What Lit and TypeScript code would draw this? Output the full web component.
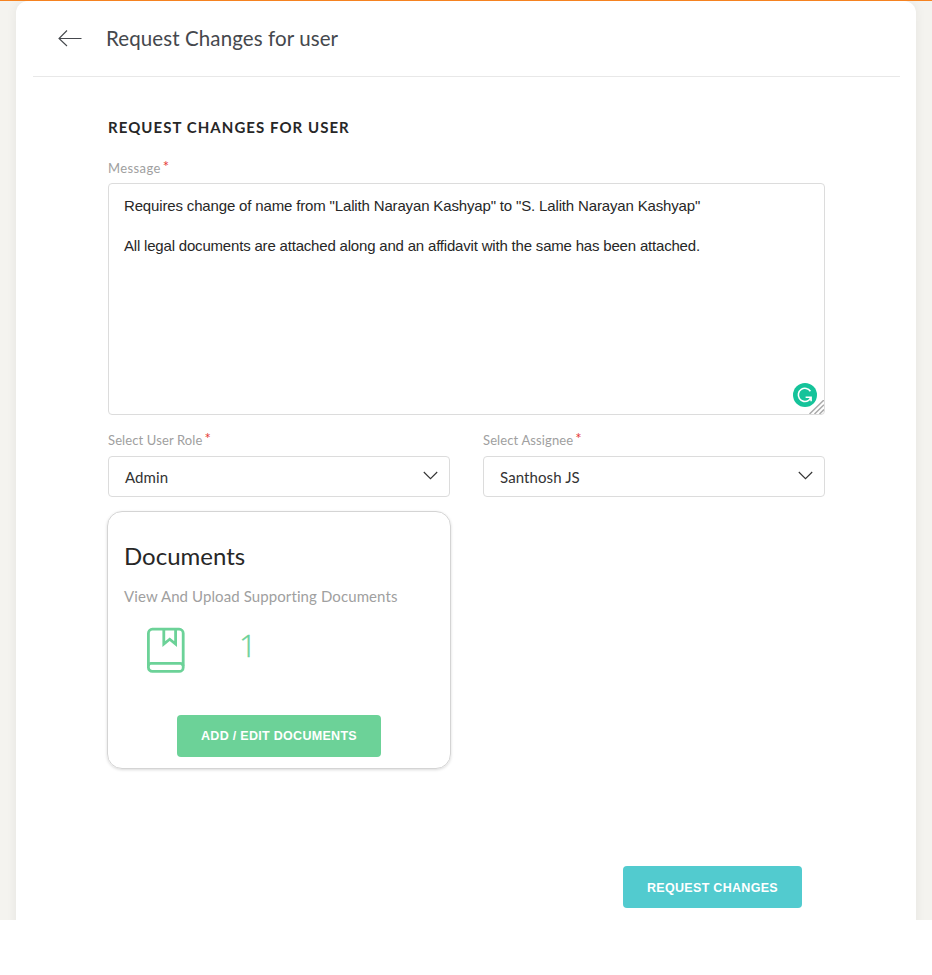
import { LitElement, html, css } from "lit";
import { customElement, property } from "lit/decorators.js";

@customElement("select-field")
class SelectField extends LitElement {
  @property() label = "";
  @property() value = "";

  static styles = css`
    :host { display: block; width: 342px; }
    .label { height: 23px; font-size: 13px; line-height: 18px; letter-spacing: 0.12px; color: #a0a0a0; display: flex; }
    .star { color: #e53935; font-size: 15px; line-height: 14px; margin-left: 2px; letter-spacing: 0; }
    .box { box-sizing: border-box; height: 41px; margin-top: 2px; border: 1px solid #dcdcdc; border-radius: 4px; display: flex; align-items: center; justify-content: space-between; padding: 0 11px 0 16px; font-size: 15px; color: #333; }
    .value { letter-spacing: 0.1px; }
    svg { display: block; margin-top: -2px; }
  `;

  render() {
    return html`
      <div class="label"><span>${this.label}</span><span class="star">*</span></div>
      <div class="box">
        <span class="value">${this.value}</span>
        <svg width="15" height="9" viewBox="0 0 15 9" fill="none" stroke="#333" stroke-width="1.1"><path d="M.8 1 7.5 7.7 14.2 1" /></svg>
      </div>
    `;
  }
}

@customElement("app-root")
class AppRoot extends LitElement {
  static styles = css`
    :host { display: block; height: 975px; overflow: hidden; background: #fff; font-family: Lato, "Liberation Sans", sans-serif; color: #272727; }
    .page { box-sizing: border-box; height: 920px; border-top: 1px solid #f58220; background: #f4f3ef; padding: 0 16px; overflow: hidden; }
    .sheet { box-sizing: border-box; height: 940px; background: #fff; border-radius: 12px; box-shadow: 0 0 12px rgba(0, 0, 0, 0.06); padding: 0 17px; }
    .head { box-sizing: border-box; height: 76px; width: 867px; border-bottom: 1px solid #e8e8e8; display: flex; align-items: center; padding: 0 0 1px 25px; }
    .back { display: block; margin-top: -1px; }
    .title { margin: 0 0 0 24px; font-size: 20.5px; line-height: 28px; font-weight: 400; letter-spacing: 0.1px; color: #45484d; }
    .body { padding: 0 0 0 75px; width: 717px; }
    .section { margin: 0; padding-top: 40px; height: 20px; font-size: 15px; line-height: 20px; font-weight: 700; letter-spacing: 1.05px; }
    .label { height: 24px; margin-top: 22px; font-size: 13px; line-height: 18px; letter-spacing: 0.4px; color: #a0a0a0; display: flex; }
    .star { color: #e53935; font-size: 15px; line-height: 14px; margin-left: 2px; letter-spacing: 0; }
    .message { position: relative; box-sizing: border-box; height: 232px; border: 1px solid #dcdcdc; border-radius: 4px; padding: 12px 15px; font: 15px/20px "Liberation Sans", Arial, sans-serif; }
    .message p { margin: 0 0 20px; white-space: nowrap; letter-spacing: -0.155px; }
    .message p + p { letter-spacing: -0.19px; }
    .grammar { position: absolute; right: 7px; bottom: 7px; }
    .grip { position: absolute; right: 0; bottom: 0; }
    .fields { display: flex; justify-content: space-between; margin-top: 16px; }
    .card { box-sizing: border-box; width: 344px; height: 258px; margin: 14px 0 0 -1px; border: 1px solid #d4d4d4; border-radius: 15px; box-shadow: 0 1px 3px rgba(0, 0, 0, 0.15); padding: 27px 16px 0; }
    .name { margin: 0; font-size: 24px; line-height: 34px; font-weight: 400; }
    .hint { margin: 13px 0 0; font-size: 15px; line-height: 20px; letter-spacing: 0.1px; color: #a0a0a0; }
    .stat { display: flex; align-items: center; height: 46px; margin-top: 21px; padding-left: 22px; color: #6cd298; }
    .count { font-family: "Open Sans", "Noto Sans", sans-serif; font-size: 31px; line-height: 36px; font-weight: 300; -webkit-text-stroke: 0.4px currentColor; margin: -11px 0 0 54px; }
    .btn { display: block; height: 42px; border: 0; border-radius: 4px; padding: 0; color: #fff; font: bold 12.5px/42px "Liberation Sans", Arial, sans-serif; letter-spacing: 0.3px; text-align: center; }
    .edit { width: 204px; margin: 42px auto 0; background: #6cd298; }
    .submit { width: 179px; margin: 97px 23px 0 auto; padding-top: 1px; background: #52cbcf; }
  `;

  render() {
    return html`
      <div class="page">
        <main class="sheet">
          <header class="head">
            <svg class="back" width="24" height="18" viewBox="0 0 24 18" fill="none" stroke="#45484d" stroke-width="1.1"><path d="M23.5 9.5H1M9 1.5 1 9.5l8 7.5" /></svg>
            <h1 class="title">Request Changes for user</h1>
          </header>
          <div class="body">
            <h2 class="section">REQUEST CHANGES FOR USER</h2>
            <div class="label"><span>Message</span><span class="star">*</span></div>
            <div class="message">
              <p>Requires change of name from "Lalith Narayan Kashyap" to "S. Lalith Narayan Kashyap"</p>
              <p>All legal documents are attached along and an affidavit with the same has been attached.</p>
              <svg class="grammar" width="24" height="24" viewBox="0 0 24 24" fill="none"><circle cx="12" cy="12" r="12" fill="#15c39a" /><path d="M17.4 8.2A6.6 6.6 0 1 0 15.6 17.4Q17.6 16 18 14M12.6 14.2h5.5v4" stroke="#fff" stroke-width="1.6" /></svg>
              <svg class="grip" width="15" height="14" viewBox="0 0 15 14" stroke="#aaa" stroke-width="1.5"><path d="M.5 14 15 0M5.5 14 15 4.8M10.5 14 15 9.6" /></svg>
            </div>
            <div class="fields">
              <select-field label="Select User Role" value="Admin"></select-field>
              <select-field label="Select Assignee" value="Santhosh JS"></select-field>
            </div>
            <section class="card">
              <h3 class="name">Documents</h3>
              <p class="hint">View And Upload Supporting Documents</p>
              <div class="stat">
                <svg width="39" height="46" viewBox="0 0 39 46" fill="none" stroke="currentColor" stroke-width="2.8"><rect x="2.4" y="2.2" width="34.8" height="42.2" rx="4" /><path d="M2.4 39Q2.4 36.4 5 36.4h29q3 0 3 2.6M17.8 2v15l5.9-4.8 5.9 4.8V2" /></svg>
                <span class="count">1</span>
              </div>
              <button class="btn edit">ADD / EDIT DOCUMENTS</button>
            </section>
            <button class="btn submit">REQUEST CHANGES</button>
          </div>
        </main>
      </div>
    `;
  }
}
